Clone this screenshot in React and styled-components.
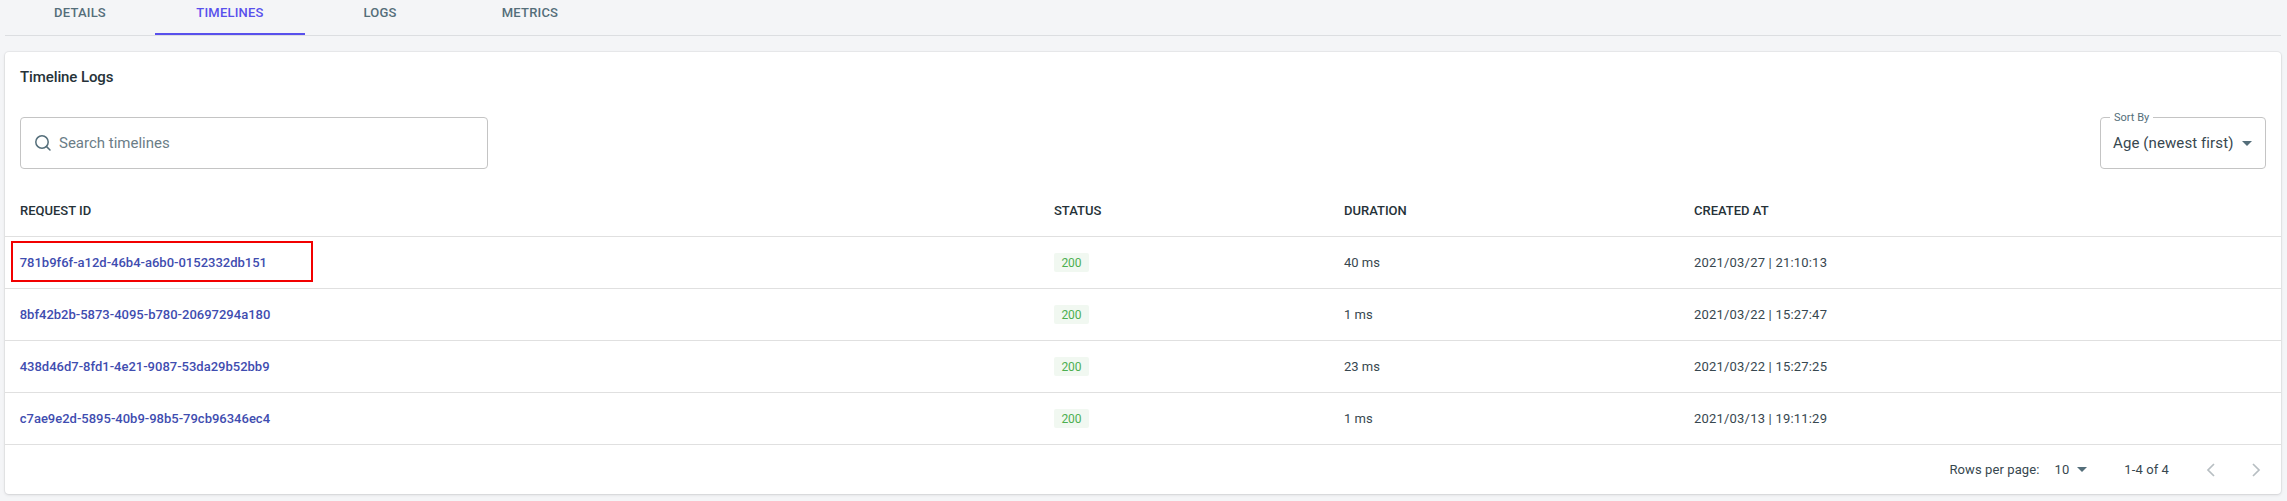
import React from 'react';
import styled, { createGlobalStyle } from 'styled-components';

const Global = createGlobalStyle`
  html, body { margin: 0; padding: 0; background: #f4f5f7; }
  body { font-family: Roboto, "Liberation Sans", sans-serif; color: #263238; }
`;
const Page = styled.div`
  height: 501px;
  padding: 0 6px 0 5px;
  box-sizing: border-box;
  overflow: hidden;
`;
const Tabs = styled.nav`
  display: flex;
  height: 35px;
  border-bottom: 1px solid #dcdee1;
`;
const Tab = styled.div`
  width: 150px;
  height: 35px;
  box-sizing: border-box;
  padding-top: 5px;
  text-align: center;
  font-size: 13px;
  font-weight: 500;
  line-height: 16px;
  letter-spacing: 0.2px;
  text-transform: uppercase;
  color: ${p => (p.$active ? '#5850ec' : '#546e7a')};
  border-bottom: 2px solid ${p => (p.$active ? '#5850ec' : 'transparent')};
`;
const Card = styled.section`
  position: relative;
  margin-top: 16px;
  height: 442px;
  background: #fff;
  border-radius: 4px;
  box-shadow: 0 0 0 1px rgba(63,63,68,0.05), 0 1px 3px rgba(63,63,68,0.15);
`;
const Title = styled.h2`
  margin: 0;
  padding: 16px 15px 0;
  height: 65px;
  box-sizing: border-box;
  font-size: 15px;
  font-weight: 500;
  line-height: 18px;
  letter-spacing: -0.1px;
  color: #263238;
`;
const Toolbar = styled.div`
  display: flex;
  justify-content: space-between;
  padding: 0 15px;
  height: 68px;
`;
const Search = styled.div`
  width: 468px;
  height: 52px;
  box-sizing: border-box;
  border: 1px solid #c4c4c4;
  border-radius: 4px;
  display: flex;
  align-items: center;
  padding-left: 13px;
  gap: 7px;
  font-size: 15px;
  color: #6b7d87;
`;
const Select = styled.div`
  position: relative;
  width: 166px;
  height: 52px;
  box-sizing: border-box;
  border: 1px solid #c4c4c4;
  border-radius: 4px;
  display: flex;
  align-items: center;
  padding: 0 13px 0 12px;
  justify-content: space-between;
  font-size: 15px;
  letter-spacing: 0.1px;
  color: #37474f;
`;
const SelectLabel = styled.span`
  position: absolute;
  left: 9px;
  top: -7px;
  padding: 0 4px;
  background: #fff;
  font-size: 11px;
  line-height: 13px;
  letter-spacing: 0;
  color: #546e7a;
`;
const Arrow = styled.span`
  display: inline-block;
  width: 0;
  height: 0;
  border-left: 5px solid transparent;
  border-right: 5px solid transparent;
  border-top: 5px solid #546e7a;
`;
const Row = styled.div`
  display: grid;
  grid-template-columns: 1034px 290px 350px 1fr;
  align-items: center;
  height: 52px;
  box-sizing: border-box;
  border-bottom: 1px solid #e0e0e0;
  font-size: 13px;
  color: #37474f;
`;
const HeadRow = styled(Row)`
  font-weight: 500;
  color: #263238;
  text-transform: uppercase;
`;
const Cell = styled.div`
  padding-left: 15px;
`;
const DateCell = styled(Cell)`
  letter-spacing: 0.2px;
`;
const IdLink = styled.a`
  margin-left: -0.3px;
  font-weight: 500;
  color: #3f4db0;
`;
const Chip = styled.span`
  display: inline-flex;
  align-items: center;
  justify-content: center;
  width: 35px;
  height: 19px;
  border-radius: 2px;
  background: #f1f8f1;
  color: #4caf50;
  font-size: 12px;
  font-weight: 400;
`;
const Footer = styled.div`
  display: flex;
  align-items: center;
  justify-content: flex-end;
  height: 49px;
  font-size: 13px;
  letter-spacing: 0.1px;
  color: #37474f;
`;
const Rows = styled.span`
  margin-right: 15px;
`;
const PageSize = styled.span`
  display: inline-flex;
  align-items: center;
  gap: 8px;
  margin-right: 37px;
  margin-top: -1px;
`;
const Range = styled.span`
  margin-right: 30px;
`;
const Pager = styled.button`
  all: unset;
  display: flex;
  width: 24px;
  height: 24px;
  margin-right: ${p => p.$mr}px;
  color: #b7bec2;
`;
const Highlight = styled.div`
  position: absolute;
  left: 6px;
  top: 189px;
  width: 302px;
  height: 41px;
  box-sizing: border-box;
  border: 2px solid #f20000;
`;

const data = [
  ['781b9f6f-a12d-46b4-a6b0-0152332db151', '40 ms', '2021/03/27 | 21:10:13'],
  ['8bf42b2b-5873-4095-b780-20697294a180', '1 ms', '2021/03/22 | 15:27:47'],
  ['438d46d7-8fd1-4e21-9087-53da29b52bb9', '23 ms', '2021/03/22 | 15:27:25'],
  ['c7ae9e2d-5895-40b9-98b5-79cb96346ec4', '1 ms', '2021/03/13 | 19:11:29'],
];

const SearchIcon = () => (
  <svg width="18" height="18" viewBox="0 0 18 18" fill="none" stroke="#546e7a" strokeWidth="1.5" strokeLinecap="round">
    <circle cx="8" cy="8" r="6.2" />
    <path d="M12.6 12.6 16 16" />
  </svg>
);
const Chevron = ({ d }) => (
  <svg width="24" height="24" viewBox="0 0 24 24" fill="none" stroke="currentColor" strokeWidth="1.7">
    <path d={d} />
  </svg>
);

export default function App() {
  return (
    <Page>
      <Global />
      <Tabs>
        <Tab>Details</Tab>
        <Tab $active>Timelines</Tab>
        <Tab>Logs</Tab>
        <Tab>Metrics</Tab>
      </Tabs>
      <Card>
        <Title>Timeline Logs</Title>
        <Toolbar>
          <Search><SearchIcon />Search timelines</Search>
          <Select>
            <SelectLabel>Sort By</SelectLabel>
            Age (newest first)
            <Arrow />
          </Select>
        </Toolbar>
        <HeadRow>
          <Cell>Request ID</Cell>
          <Cell>Status</Cell>
          <Cell>Duration</Cell>
          <Cell>Created at</Cell>
        </HeadRow>
        {data.map(([id, dur, at]) => (
          <Row key={id}>
            <Cell><IdLink>{id}</IdLink></Cell>
            <Cell><Chip>200</Chip></Cell>
            <Cell>{dur}</Cell>
            <DateCell>{at}</DateCell>
          </Row>
        ))}
        <Footer>
          <Rows>Rows per page:</Rows>
          <PageSize>10<Arrow /></PageSize>
          <Range>1-4 of 4</Range>
          <Pager $mr={21}><Chevron d="M15 6l-6 6 6 6" /></Pager>
          <Pager $mr={13}><Chevron d="M9 6l6 6-6 6" /></Pager>
        </Footer>
        <Highlight />
      </Card>
    </Page>
  );
}
